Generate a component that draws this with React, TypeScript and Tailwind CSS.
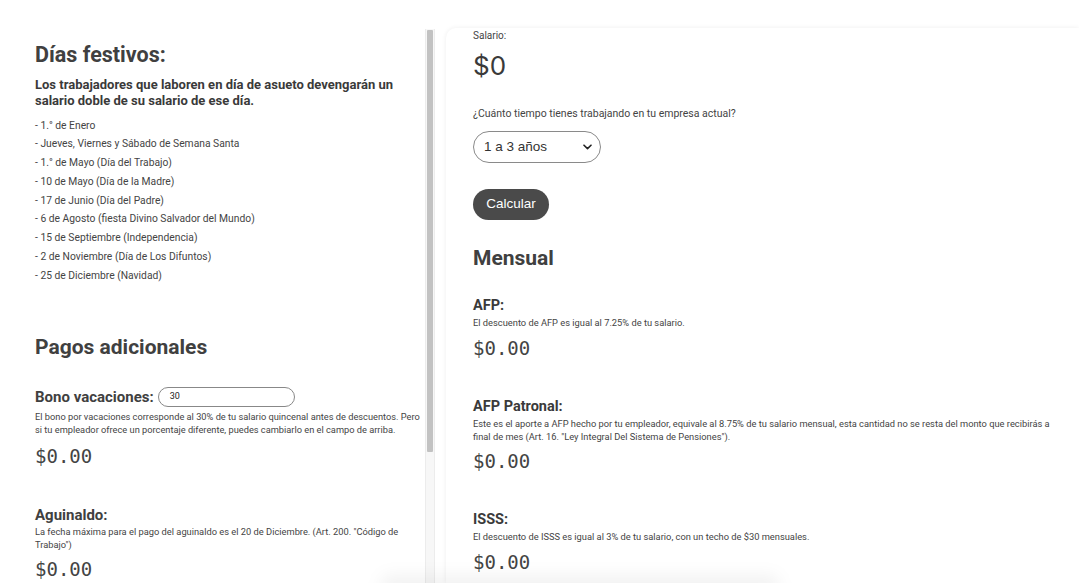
import React from "react";

const holidays = [
  "- 1.° de Enero",
  "- Jueves, Viernes y Sábado de Semana Santa",
  "- 1.° de Mayo (Día del Trabajo)",
  "- 10 de Mayo (Día de la Madre)",
  "- 17 de Junio (Día del Padre)",
  "- 6 de Agosto (fiesta Divino Salvador del Mundo)",
  "- 15 de Septiembre (Independencia)",
  "- 2 de Noviembre (Día de Los Difuntos)",
  "- 25 de Diciembre (Navidad)",
];

function Money({ className = "" }: { className?: string }) {
  return (
    <div
      className={`text-[19px] leading-[24px] text-[#444] ${className}`}
      style={{ fontFamily: '"DejaVu Sans Mono", monospace' }}
    >
      $0.00
    </div>
  );
}

export default function App() {
  return (
    <div
      className="relative flex h-[583px] w-[1079px] overflow-hidden bg-white text-[#444]"
      style={{ fontFamily: 'Roboto, "Liberation Sans", sans-serif' }}
    >
      {/* Left column */}
      <div className="w-[425px] shrink-0 pl-[35px] pr-[2px] pt-[42px]">
        <h2 className="text-[21.5px] font-bold leading-[26px] text-[#404040]">Días festivos:</h2>
        <p className="mt-[9px] pr-[4px] text-[13px] font-bold leading-[16px] text-[#3a3a3a]">
          Los trabajadores que laboren en día de asueto devengarán un salario doble de su salario de ese día.
        </p>
        <ul className="mt-[7.5px] text-[10.3px] leading-[18.75px] text-[#444]">
          {holidays.map((h) => (
            <li key={h}>{h}</li>
          ))}
        </ul>
        <h2 className="mt-[48.5px] text-[21px] font-bold leading-[26px] text-[#404040]">Pagos adicionales</h2>
        <div className="mt-[26px] flex h-[22px] items-center gap-[4px]">
          <span className="text-[15px] font-bold leading-[20px] text-[#404040]">Bono vacaciones:</span>
          <div className="flex h-[20px] w-[137px] items-center rounded-full border border-[#888] px-[11px] text-[9px] text-[#222]">
            30
          </div>
        </div>
        <p className="mt-[2.5px] text-[9.25px] leading-[13px] text-[#444]">
          El bono por vacaciones corresponde al 30% de tu salario quincenal antes de descuentos. Pero si tu empleador ofrece un porcentaje diferente, puedes cambiarlo en el campo de arriba.
        </p>
        <Money className="mt-[7.5px]" />
        <h3 className="mt-[37px] text-[15px] font-bold leading-[20px] text-[#404040]">Aguinaldo:</h3>
        <p className="text-[9.3px] leading-[13px] text-[#444]">
          La fecha máxima para el pago del aguinaldo es el 20 de Diciembre. (Art. 200. "Código de Trabajo")
        </p>
        <Money className="mt-[6.5px]" />
      </div>

      {/* Scrollbar */}
      <div className="mt-[29px] flex w-[10px] shrink-0 justify-center border-x border-[#ececec] bg-[#f7f7f7] pt-[1px]">
        <div className="h-[422px] w-[6px] rounded-[1px] bg-[#c2c2c2]" />
      </div>

      {/* Right column */}
      <div className="ml-[11px] mt-[28px] flex-1 rounded-tl-[10px] bg-white pl-[27px] pr-[25px] pt-[1px] shadow-[0_0_5px_rgba(0,0,0,0.07)]">
        <div className="text-[10px] leading-[14px] text-[#444]">Salario:</div>
        <div className="mt-[8px] text-[26px] leading-[30px] text-[#3a3a3a]" style={{ fontFamily: 'Inter, Roboto, sans-serif' }}>
          $0
        </div>
        <div className="mt-[26px] text-[10.5px] leading-[14px] text-[#444]">
          ¿Cuánto tiempo tienes trabajando en tu empresa actual?
        </div>
        <div
          className="mt-[10px] flex h-[32px] w-[128px] items-center justify-between rounded-full border border-[#8a8a8a] pl-[10px] pr-[8px] text-[13.5px] text-[#333]"
          style={{ fontFamily: '"Liberation Sans", Arial, sans-serif' }}
        >
          <span>1 a 3 años</span>
          <svg width="9" height="6" viewBox="0 0 9 6" fill="none">
            <path d="M1 1.2 L4.5 4.6 L8 1.2" stroke="#222" strokeWidth="1.6" strokeLinecap="round" strokeLinejoin="round" />
          </svg>
        </div>
        <div
          className="mt-[26px] flex h-[31px] w-[76px] items-center justify-center rounded-full bg-[#4a4a4a] text-[13.5px] text-white"
          style={{ fontFamily: '"Liberation Sans", Arial, sans-serif' }}
        >
          Calcular
        </div>
        <h2 className="mt-[25px] text-[21px] font-bold leading-[26px] text-[#404040]">Mensual</h2>

        <h3 className="mt-[26px] text-[14.5px] font-bold leading-[18px] text-[#3a3a3a]">AFP:</h3>
        <p className="mt-[0.5px] text-[9.3px] leading-[13px] text-[#444]">
          El descuento de AFP es igual al 7.25% de tu salario.
        </p>
        <Money className="mt-[7.5px]" />

        <h3 className="mt-[38px] text-[14.5px] font-bold leading-[18px] text-[#3a3a3a]">AFP Patronal:</h3>
        <p className="mt-[0.5px] text-[9.3px] leading-[13px] text-[#444]">
          Este es el aporte a AFP hecho por tu empleador, equivale al 8.75% de tu salario mensual, esta cantidad no se resta del monto que recibirás a final de mes (Art. 16. "Ley Integral Del Sistema de Pensiones").
        </p>
        <Money className="mt-[6.5px]" />

        <h3 className="mt-[38px] text-[14.5px] font-bold leading-[18px] text-[#3a3a3a]">ISSS:</h3>
        <p className="mt-[0.5px] text-[9.3px] leading-[13px] text-[#444]">
          El descuento de ISSS es igual al 3% de tu salario, con un techo de $30 mensuales.
        </p>
        <Money className="mt-[7.5px]" />
      </div>

      {/* bottom faint shadow */}
      <div className="pointer-events-none absolute bottom-[-14px] left-[380px] h-[22px] w-[400px] rounded-full bg-[rgba(0,0,0,0.05)] blur-[8px]" />
    </div>
  );
}
